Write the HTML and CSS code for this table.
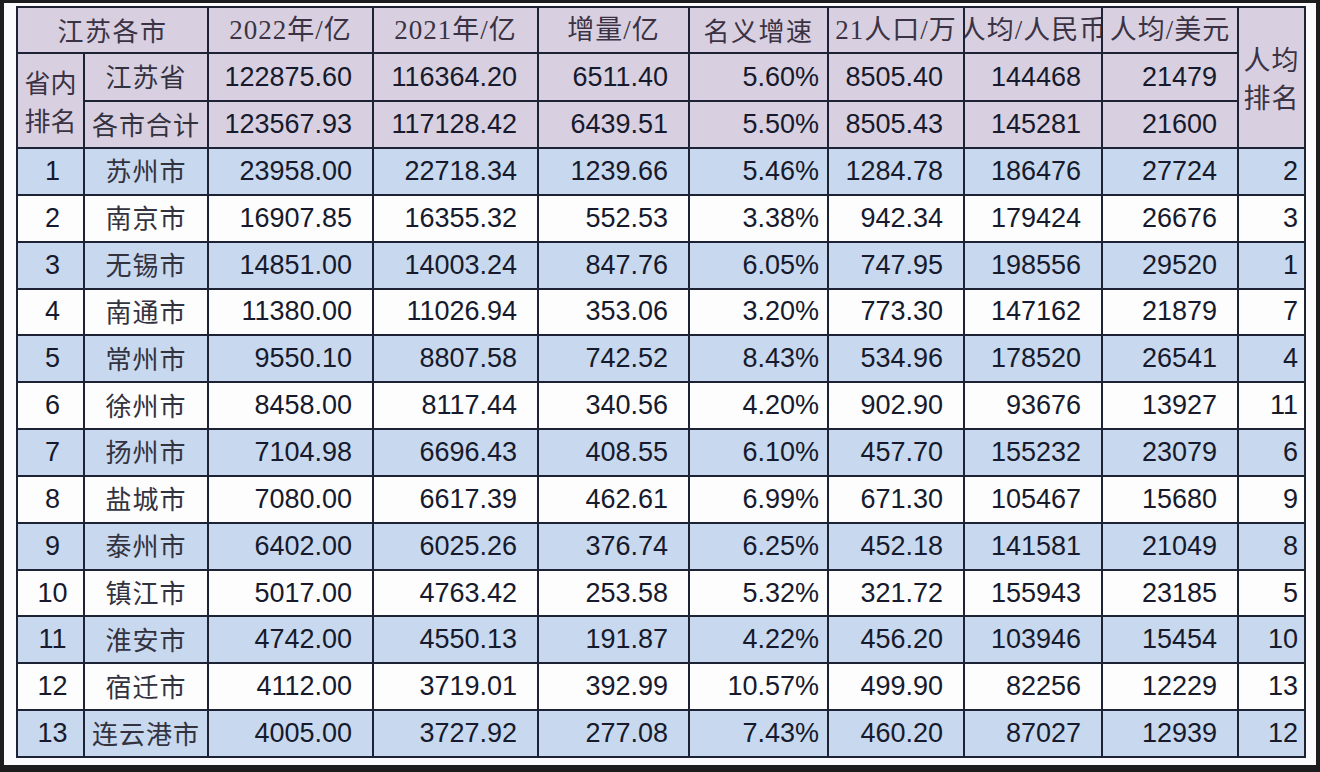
FILE: index.html
```html
<!DOCTYPE html>
<html lang="zh-CN">
<head>
<meta charset="utf-8">
<title>江苏各市 GDP</title>
<link rel="stylesheet" href="styles.css">
</head>
<body>
<div class="panel">
<table class="gdp">
<colgroup>
<col class="c1"><col class="c2"><col class="c3"><col class="c4"><col class="c5"><col class="c6"><col class="c7"><col class="c8"><col class="c9"><col class="c10">
</colgroup>
<tr class="head">
<th colspan="2" class="cjk wide">江苏各市</th>
<th>2022年/亿</th>
<th>2021年/亿</th>
<th>增量/亿</th>
<th class="cjk">名义增速</th>
<th>21人口/万</th>
<th class="clip"><div class="over">人均/人民币</div></th>
<th>人均/美元</th>
<th rowspan="3" class="rank-head">人均<br>排名</th>
</tr>
<tr class="sum r1">
<td rowspan="2" class="rank-left">省内<br>排名</td>
<td class="name">江苏省</td>
<td class="num">122875.60</td><td class="num">116364.20</td><td class="num">6511.40</td><td class="pct">5.60%</td><td class="num">8505.40</td><td class="num">144468</td><td class="num">21479</td>
</tr>
<tr class="sum r2">
<td class="name">各市合计</td>
<td class="num">123567.93</td><td class="num">117128.42</td><td class="num">6439.51</td><td class="pct">5.50%</td><td class="num">8505.43</td><td class="num">145281</td><td class="num">21600</td>
</tr>
<tr class="row blue"><td class="idx">1</td><td class="name">苏州市</td><td class="num">23958.00</td><td class="num">22718.34</td><td class="num">1239.66</td><td class="pct">5.46%</td><td class="num">1284.78</td><td class="num">186476</td><td class="num">27724</td><td class="rk">2</td></tr>
<tr class="row"><td class="idx">2</td><td class="name">南京市</td><td class="num">16907.85</td><td class="num">16355.32</td><td class="num">552.53</td><td class="pct">3.38%</td><td class="num">942.34</td><td class="num">179424</td><td class="num">26676</td><td class="rk">3</td></tr>
<tr class="row blue"><td class="idx">3</td><td class="name">无锡市</td><td class="num">14851.00</td><td class="num">14003.24</td><td class="num">847.76</td><td class="pct">6.05%</td><td class="num">747.95</td><td class="num">198556</td><td class="num">29520</td><td class="rk">1</td></tr>
<tr class="row"><td class="idx">4</td><td class="name">南通市</td><td class="num">11380.00</td><td class="num">11026.94</td><td class="num">353.06</td><td class="pct">3.20%</td><td class="num">773.30</td><td class="num">147162</td><td class="num">21879</td><td class="rk">7</td></tr>
<tr class="row blue"><td class="idx">5</td><td class="name">常州市</td><td class="num">9550.10</td><td class="num">8807.58</td><td class="num">742.52</td><td class="pct">8.43%</td><td class="num">534.96</td><td class="num">178520</td><td class="num">26541</td><td class="rk">4</td></tr>
<tr class="row"><td class="idx">6</td><td class="name">徐州市</td><td class="num">8458.00</td><td class="num">8117.44</td><td class="num">340.56</td><td class="pct">4.20%</td><td class="num">902.90</td><td class="num">93676</td><td class="num">13927</td><td class="rk">11</td></tr>
<tr class="row blue"><td class="idx">7</td><td class="name">扬州市</td><td class="num">7104.98</td><td class="num">6696.43</td><td class="num">408.55</td><td class="pct">6.10%</td><td class="num">457.70</td><td class="num">155232</td><td class="num">23079</td><td class="rk">6</td></tr>
<tr class="row"><td class="idx">8</td><td class="name">盐城市</td><td class="num">7080.00</td><td class="num">6617.39</td><td class="num">462.61</td><td class="pct">6.99%</td><td class="num">671.30</td><td class="num">105467</td><td class="num">15680</td><td class="rk">9</td></tr>
<tr class="row blue"><td class="idx">9</td><td class="name">泰州市</td><td class="num">6402.00</td><td class="num">6025.26</td><td class="num">376.74</td><td class="pct">6.25%</td><td class="num">452.18</td><td class="num">141581</td><td class="num">21049</td><td class="rk">8</td></tr>
<tr class="row"><td class="idx">10</td><td class="name">镇江市</td><td class="num">5017.00</td><td class="num">4763.42</td><td class="num">253.58</td><td class="pct">5.32%</td><td class="num">321.72</td><td class="num">155943</td><td class="num">23185</td><td class="rk">5</td></tr>
<tr class="row blue"><td class="idx">11</td><td class="name">淮安市</td><td class="num">4742.00</td><td class="num">4550.13</td><td class="num">191.87</td><td class="pct">4.22%</td><td class="num">456.20</td><td class="num">103946</td><td class="num">15454</td><td class="rk">10</td></tr>
<tr class="row"><td class="idx">12</td><td class="name">宿迁市</td><td class="num">4112.00</td><td class="num">3719.01</td><td class="num">392.99</td><td class="pct">10.57%</td><td class="num">499.90</td><td class="num">82256</td><td class="num">12229</td><td class="rk">13</td></tr>
<tr class="row blue"><td class="idx">13</td><td class="name">连云港市</td><td class="num">4005.00</td><td class="num">3727.92</td><td class="num">277.08</td><td class="pct">7.43%</td><td class="num">460.20</td><td class="num">87027</td><td class="num">12939</td><td class="rk">12</td></tr>
</table>
</div>
</body>
</html>
```
FILE: styles.css
```css
html, body {
  margin: 0;
  padding: 0;
  background: #1d1d1f;
}
body {
  width: 1320px;
  height: 772px;
  overflow: hidden;
}
.panel {
  margin: 3px 4px 0 4px;
  width: 1312px;
  height: 762px;
  box-sizing: border-box;
  padding: 3px 12px 9px 12px;
  background: #fbfbfd;
}
.gdp {
  width: 1288px;
  table-layout: fixed;
  border-collapse: collapse;
  border: 2px solid #1e2235;
  font-family: "Liberation Sans", Arial, "Noto Sans CJK SC", sans-serif;
  font-size: 27px;
  color: #161a2c;
}
.c1 { width: 67px; }
.c2 { width: 124px; }
.c3 { width: 165px; }
.c4 { width: 165px; }
.c5 { width: 151px; }
.c6 { width: 139px; }
.c7 { width: 136px; }
.c8 { width: 138px; }
.c9 { width: 136px; }
.c10 { width: 67px; }
.gdp th, .gdp td {
  border: 2px solid #1e2235;
  padding: 0;
  white-space: nowrap;
  line-height: 1;
}
.gdp th {
  font-family: "Liberation Serif", "Noto Sans CJK SC", serif;
  font-weight: normal;
  font-size: 27px;
  letter-spacing: 1px;
  color: #3b3344;
  text-align: center;
  background: #d8d0e0;
  overflow: hidden;
}
.gdp th.cjk {
  font-family: "Noto Sans CJK SC", sans-serif;
  font-size: 26px;
  letter-spacing: 1.5px;
}
.head { height: 46px; }
.sum.r1 { height: 48px; }
.sum.r2 { height: 47px; }
.row { height: 46.85px; }
.sum td { background: #d8d0e0; }
.row td { background: #fdfdfe; }
.row.blue td { background: #c8d8ee; }
.num {
  text-align: right;
  padding-right: 20px !important;
}
.pct {
  text-align: right;
  padding-right: 8px !important;
}
.rk {
  text-align: right;
  padding-right: 6px !important;
}
.idx { text-align: center; padding-left: 4px !important; }
.name {
  font-family: "Noto Sans CJK SC", sans-serif;
  font-size: 26px;
  color: #33323f;
  text-align: center;
  letter-spacing: 1px;
  padding-bottom: 2px !important;
}
.rank-left, .rank-head {
  font-family: "Noto Sans CJK SC", sans-serif;
  font-size: 26px;
  color: #3b3344;
  text-align: center;
  line-height: 38px !important;
  background: #d8d0e0;
}
.rank-head { padding-top: 4px !important; }
.rank-left { padding-top: 0; }
.clip { overflow: hidden; }
.over {
  display: flex;
  justify-content: center;
  overflow: hidden;
  white-space: nowrap;
}
```
